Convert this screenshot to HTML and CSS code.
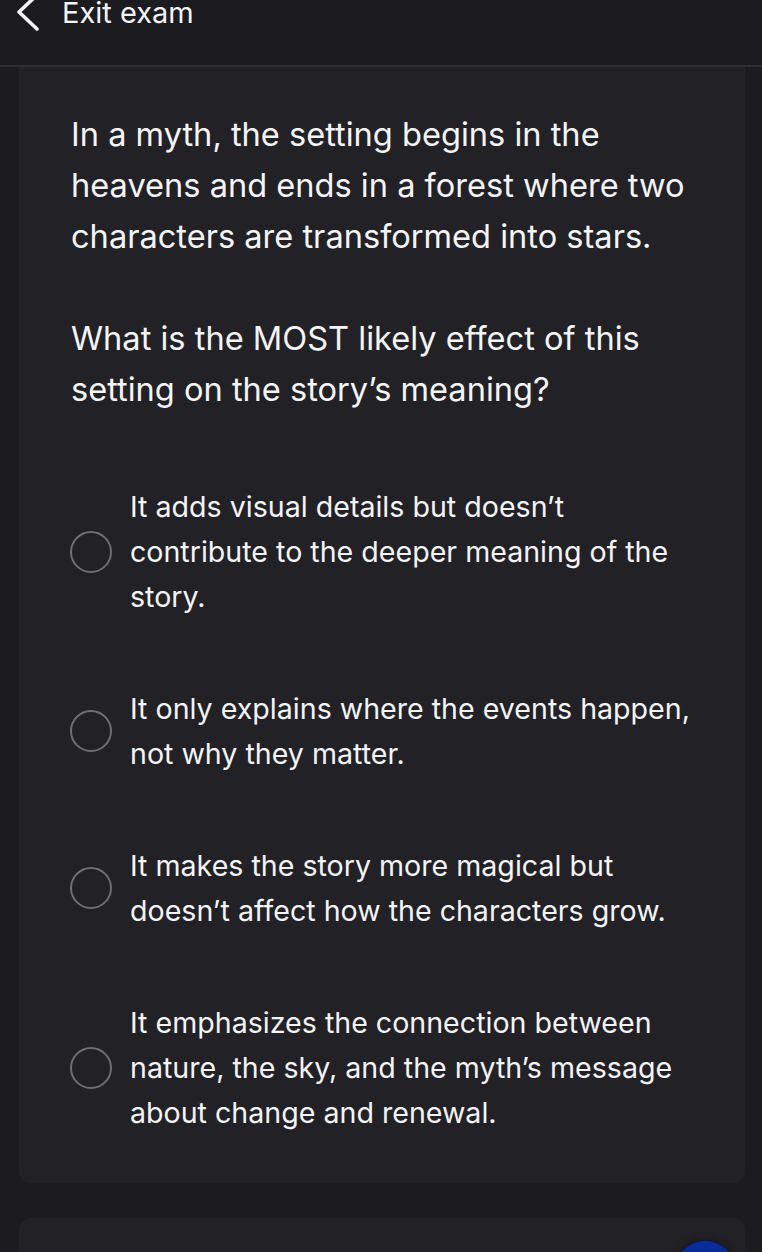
FILE: index.html
```html
<!DOCTYPE html>
<html lang="en">
<head>
<meta charset="utf-8">
<title>Exam</title>
<link rel="stylesheet" href="styles.css">
</head>
<body>
<header class="topbar">
  <svg class="back" width="26" height="32" viewBox="0 0 26 32" aria-hidden="true">
    <polyline points="22,-3 4,14 22,31" fill="none" stroke="#f4f4f6" stroke-width="3.6" stroke-linecap="round" stroke-linejoin="round"/>
  </svg>
  <span class="exit">Exit exam</span>
</header>
<main class="page">
  <section class="card">
    <div class="question">
      <p>In a myth, the setting begins in the heavens and ends in a forest where two characters are transformed into stars.</p>
      <p>What is the MOST likely effect of this setting on the story’s meaning?</p>
    </div>
    <ul class="options">
      <li class="option"><span class="radio"></span><span class="label">It adds visual details but doesn’t contribute to the deeper meaning of the story.</span></li>
      <li class="option"><span class="radio"></span><span class="label">It only explains where the events happen, not why they matter.</span></li>
      <li class="option"><span class="radio"></span><span class="label">It makes the story more magical but doesn’t affect how the characters grow.</span></li>
      <li class="option"><span class="radio"></span><span class="label">It emphasizes the connection between nature, the sky, and the myth’s message about change and renewal.</span></li>
    </ul>
  </section>
  <section class="card next">
    <span class="fab"></span>
  </section>
</main>
</body>
</html>
```

FILE: styles.css
```css
* { box-sizing: border-box; }
html, body {
  margin: 0;
  padding: 0;
  background: #1c1b20;
  height: 1252px;
  overflow: hidden;
}
body {
  font-family: Inter, "Noto Sans", "Liberation Sans", sans-serif;
  color: #f4f4f6;
}
.topbar {
  height: 67px;
  display: flex;
  align-items: flex-start;
  border-bottom: 2px solid #2f2f33;
  padding-left: 15px;
}
.back {
  display: block;
  margin-top: -2px;
  overflow: visible;
}
.exit {
  margin-left: 21px;
  font-size: 29px;
  line-height: 26px;
  margin-top: 0;
}
.page {
  padding: 0 17px 0 19px;
}
.card {
  background: #222226;
  border-radius: 0 0 12px 12px;
  padding: 42px 30px 48px 52px;
}
.question p {
  margin: 0 0 51px 0;
  font-size: 32.6px;
  line-height: 51px;
}
.question p:last-child { margin-bottom: 0; }
.options {
  list-style: none;
  margin: 69px 0 0 0;
  padding: 0;
  display: flex;
  flex-direction: column;
  gap: 67px;
}
.option {
  display: flex;
  align-items: center;
  gap: 18px;
}
.radio {
  flex: none;
  width: 42px;
  height: 42px;
  border-radius: 50%;
  border: 2px solid #6e6e73;
  margin-left: -1px;
}
.label {
  font-size: 28.6px;
  line-height: 45px;
  max-width: 572px;
}
.card.next {
  margin-top: 35px;
  border-radius: 12px 12px 0 0;
  height: 60px;
  padding: 23px 10px 0 0;
  display: flex;
  justify-content: flex-end;
  overflow: hidden;
}
.fab {
  width: 60px;
  height: 60px;
  border-radius: 50%;
  background: #0a2b9a;
  box-shadow: 0 0 8px rgba(0,0,0,0.5);
}
```
